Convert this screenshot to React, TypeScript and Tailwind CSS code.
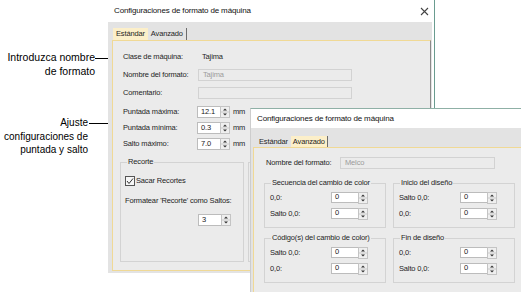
import React from 'react';

function Arrow({ w }: { w: number }) {
  return (
    <svg width={w} height="5" viewBox={`0 0 ${w} 5`} className="shrink-0">
      <line x1="0" y1="2.5" x2={w - 3} y2="2.5" stroke="#000" strokeWidth="1" />
      <path d={`M${w - 5} 0.5 L${w - 0.5} 2.5 L${w - 5} 4.5 Z`} fill="#000" />
    </svg>
  );
}

function SpinArrows() {
  return (
    <svg width="10" height="12" viewBox="0 0 10 12" className="shrink-0">
      <rect x="0.5" y="0.5" width="9" height="11" fill="#efefef" stroke="#c4c4c4" />
      <line x1="1" y1="6" x2="9" y2="6" stroke="#c9c9c9" />
      <path d="M3 4.5 L5 2.5 L7 4.5 Z" fill="#333" />
      <path d="M3 7.5 L5 9.5 L7 7.5 Z" fill="#333" />
    </svg>
  );
}

function Spin({ value, w, h = 12 }: { value: string; w: number; h?: number }) {
  return (
    <div className="flex">
      <div
        className={`flex items-center border border-r-0 border-[#bcbcbc] bg-white pl-[3px] text-[#1a1a1a] ${
          w === 23 ? 'w-[23px]' : 'w-[27px]'
        } ${h === 12 ? 'h-[12px]' : 'h-[11px]'}`}
      >
        {value}
      </div>
      <SpinArrows />
    </div>
  );
}

function Tab({ label, active }: { label: string; active?: boolean }) {
  return (
    <div
      className={`flex h-[12px] items-center px-[3px] ${
        active ? 'bg-[#fcefc9]' : 'border-r border-[#6d6d6d]'
      }`}
    >
      {label}
    </div>
  );
}

function Row({ label, value }: { label: string; value: string }) {
  return (
    <div className="mt-[5px] flex h-[11px] items-center">
      <span className="w-[61px]">{label}</span>
      <Spin value={value} w={27} h={11} />
    </div>
  );
}

function Group({ title, rows }: { title: string; rows: [string, string][] }) {
  return (
    <fieldset className="h-[50px] w-[122px] border border-[#d3d3d3] pl-[5px]">
      <legend className="ml-[1px] px-[1px] leading-[10px]">{title}</legend>
      <div className="-mt-[1px]" />
      {rows.map(([l, v], i) => (
        <Row key={i} label={l} value={v} />
      ))}
    </fieldset>
  );
}

export default function App() {
  return (
    <div className="relative h-[292px] w-[521px] overflow-hidden bg-white font-['Liberation_Sans','Arial',sans-serif] text-black">
      {/* callouts */}
      <div className="absolute left-0 top-[51px] flex w-[118px] items-start">
        <div className="w-[95px] whitespace-nowrap text-right text-[10.5px] leading-[13.5px]">
          Introduzca nombre
          <br />
          de formato
        </div>
        <div className="mt-[4.5px]">
          <Arrow w={23} />
        </div>
      </div>
      <div className="absolute left-0 top-[116px] flex w-[118px] items-start">
        <div className="w-[88px] whitespace-nowrap text-right text-[10px] leading-[13.5px]">
          Ajuste
          <br />
          configuraciones de
          <br />
          puntada y salto
        </div>
        <div className="ml-[1px] mt-[4.5px]">
          <Arrow w={29} />
        </div>
      </div>

      {/* Dialog 1: Estándar */}
      <div className="absolute left-[108px] top-0 flex h-[273px] w-[327px] flex-col border-r border-[#6a9c90] bg-white text-[7.5px] tracking-[-0.15px] text-[#1e1e1e]">
        <div className="flex h-[22px] shrink-0 items-center justify-between pl-[6px] pr-[5px]">
          <span className="text-[8px] text-[#111]">Configuraciones de formato de máquina</span>
          <svg width="9" height="9" viewBox="0 0 9 9">
            <path d="M1 1 L8 8 M8 1 L1 8" stroke="#444" strokeWidth="1.1" />
          </svg>
        </div>
        <div className="mr-[2px] flex flex-1 flex-col bg-[#e3e3e3] pb-[2px] pl-[4px] pr-[1px]">
          <div className="flex h-[18px] shrink-0 items-end pl-[1px]">
            <Tab label="Estándar" active />
            <Tab label="Avanzado" />
          </div>
          <div className="flex flex-1 flex-col border border-[#f0d995] border-r-[#8a8a8a] bg-[#ebebeb] pl-[10px]">
            <div className="mt-[10px] flex h-[12px] items-center">
              <span className="w-[79px]">Clase de máquina:</span>
              <span>Tajima</span>
            </div>
            <div className="mt-[6px] flex h-[12px] items-center">
              <span className="w-[75px]">Nombre del formato:</span>
              <div className="flex h-[12px] w-[154px] items-center border border-[#d2d2d2] pl-[4px] text-[#9b9b9b]">
                Tajima
              </div>
            </div>
            <div className="mt-[6px] flex h-[12px] items-center">
              <span className="w-[75px]">Comentario:</span>
              <div className="h-[12px] w-[154px] border border-[#d2d2d2]" />
            </div>
            {[
              ['Puntada máxima:', '12.1', 'mt-[7px]'],
              ['Puntada mínima:', '0.3', 'mt-[4px]'],
              ['Salto máximo:', '7.0', 'mt-[4px]'],
            ].map(([l, v, m]) => (
              <div key={l} className={`flex h-[12px] items-center ${m}`}>
                <span className="w-[74px]">{l}</span>
                <Spin value={v} w={23} />
                <span className="ml-[3px]">mm</span>
              </div>
            ))}
            <div className="-ml-[3px] mt-[7px] flex">
              <fieldset className="h-[105px] w-[124px] border border-[#d3d3d3] pl-[4px]">
                <legend className="ml-[2px] px-[1px] leading-[10px]">Recorte</legend>
                <div className="mt-[9px] flex h-[10px] items-center">
                  <svg width="10" height="10" viewBox="0 0 10 10">
                    <rect x="0.5" y="0.5" width="9" height="9" fill="#f7f7f7" stroke="#555" />
                    <path d="M2 5 L4 7.5 L8 2.5" fill="none" stroke="#333" strokeWidth="1" />
                  </svg>
                  <span className="ml-[1px]">Sacar Recortes</span>
                </div>
                <div className="mt-[10px] flex h-[10px] items-center">
                  Formatear 'Recorte' como Saltos:
                </div>
                <div className="ml-[73px] mt-[8px]">
                  <Spin value="3" w={23} />
                </div>
              </fieldset>
              <fieldset className="ml-[4px] h-[105px] w-[170px] border border-[#d3d3d3]">
                <legend className="ml-[2px] px-[1px] leading-[10px]">&nbsp;</legend>
              </fieldset>
            </div>
          </div>
        </div>
      </div>

      {/* Dialog 2: Avanzado */}
      <div className="absolute left-[250px] top-[108px] flex h-[190px] w-[280px] flex-col border-l border-t border-l-[#cdcdcd] border-t-[#8fb0a6] bg-white text-[7.5px] tracking-[-0.15px] text-[#1e1e1e]">
        <div className="flex h-[19px] shrink-0 items-center pl-[6px]">
          <span className="text-[8px] text-[#111]">Configuraciones de formato de máquina</span>
        </div>
        <div className="flex flex-1 flex-col bg-[#e3e3e3] pl-[2px]">
          <div className="flex h-[19px] shrink-0 items-end pl-[3px]">
            <div className="flex h-[11px] items-center px-[3px]">Estándar</div>
            <div className="flex h-[11px] items-center border-r border-[#6d6d6d] bg-[#fcefc9] px-[2px]">
              Avanzado
            </div>
          </div>
          <div className="flex flex-1 flex-col border-l border-t border-[#f0d995] bg-[#ebebeb] pl-[12px]">
            <div className="mt-[9px] flex h-[12px] items-center">
              <span className="w-[74px]">Nombre del formato:</span>
              <div className="flex h-[12px] w-[155px] items-center border border-[#d2d2d2] pl-[4px] text-[#9b9b9b]">
                Melco
              </div>
            </div>
            <div className="-ml-[2px] mt-[9px] grid w-[250px] grid-cols-[122px_121px] gap-x-[7px] gap-y-[5px]">
              <Group
                title="Secuencia del cambio de color"
                rows={[
                  ['0,0:', '0'],
                  ['Salto 0,0:', '0'],
                ]}
              />
              <Group
                title="Inicio del diseño"
                rows={[
                  ['Salto 0,0:', '0'],
                  ['0,0:', '0'],
                ]}
              />
              <Group
                title="Código(s) del cambio de color)"
                rows={[
                  ['Salto 0,0:', '0'],
                  ['0,0:', '0'],
                ]}
              />
              <Group
                title="Fin de diseño"
                rows={[
                  ['0,0:', '0'],
                  ['Salto 0,0:', '0'],
                ]}
              />
            </div>
          </div>
        </div>
      </div>
    </div>
  );
}
